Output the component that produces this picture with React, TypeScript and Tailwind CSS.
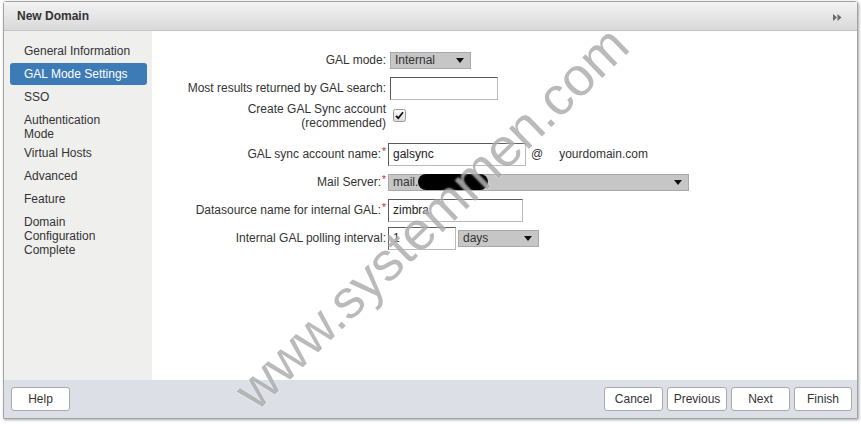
import React from "react";

const font = "font-['Liberation_Sans',Arial,sans-serif]";

function Arrow() {
  return (
    <svg width="8" height="5" viewBox="0 0 8 5" className="shrink-0">
      <path d="M0 0 H8 L4 5 Z" fill="#111" />
    </svg>
  );
}

function Req() {
  return <span className="text-[#c81e1e] text-[10px] leading-none relative -top-[3px] ml-[1px]">*</span>;
}

const navItems: { label: React.ReactNode; multi?: boolean; active?: boolean }[] = [
  { label: "General Information" },
  { label: "GAL Mode Settings", active: true },
  { label: "SSO" },
  { label: <>Authentication<br />Mode</>, multi: true },
  { label: "Virtual Hosts" },
  { label: "Advanced" },
  { label: "Feature" },
  { label: <>Domain<br />Configuration<br />Complete</>, multi: true },
];

const inputCls =
  "h-[23px] bg-white border border-t-[#5a5a5a] border-l-[#5a5a5a] border-r-[#b9b9b9] border-b-[#b9b9b9] px-[4px] flex items-center text-[12px] text-[#222]";

const selectCls =
  "h-[17px] bg-[#c6c6c6] border border-[#a9a9a9] pl-[4px] pr-[6px] flex items-center justify-between text-[12px] text-[#333]";

export default function App() {
  return (
    <div className={`relative w-[861px] h-[424px] overflow-hidden bg-white ${font}`}>
      <div className="ml-[3px] mt-[1px] w-[855px] h-[418px] flex flex-col border border-[#a3a3a3] rounded-t-[3px] shadow-[1px_1px_3px_rgba(0,0,0,0.35)]">
        {/* Title bar */}
        <div className="h-[29px] shrink-0 flex items-center justify-between px-[13px] border-b border-[#c4c4c4] bg-gradient-to-b from-[#f3f3f3] to-[#d9d9d9]">
          <span className="text-[12px] font-bold text-[#333]">New Domain</span>
          <svg width="9" height="7" viewBox="0 0 9 7" className="mr-[2px] mt-[3px]">
            <path d="M0 0 L4 3.5 L0 7 Z M4.5 0 L8.5 3.5 L4.5 7 Z" fill="#6a6a6a" />
          </svg>
        </div>

        {/* Body */}
        <div className="h-[349px] shrink-0 flex">
          <div className="w-[148px] shrink-0 bg-[#efefee] pt-[9px] pl-[6px] pr-[5px] flex flex-col gap-[1px]">
            {navItems.map((item, i) => (
              <div
                key={i}
                className={`pl-[14px] pt-[4px] ${item.multi ? "pb-0" : "pb-[4px]"} text-[12px] leading-[14px] rounded-[3px] ${
                  item.active ? "bg-[#3d7bb6] text-white" : "text-[#333]"
                }`}
              >
                {item.label}
              </div>
            ))}
          </div>

          <div className="flex-1 bg-white pt-[15px] text-[12px] text-[#333]">
            <div className="flex items-center h-[28px]">
              <div className="w-[234px] text-right">GAL mode:</div>
              <div className={`${selectCls} ml-[4px] w-[81px]`}>
                <span>Internal</span>
                <Arrow />
              </div>
            </div>

            <div className="flex items-center h-[28px]">
              <div className="w-[234px] text-right">Most results returned by GAL search:</div>
              <div className={`${inputCls} ml-[4px] w-[108px]`} />
            </div>

            <div className="flex items-center h-[28px]">
              <div className="w-[234px] text-right leading-[14px]">
                Create GAL Sync account
                <br />
                (recommended)
              </div>
              <svg width="13" height="13" viewBox="0 0 13 13" className="ml-[7px] -mt-[1px]">
                <defs>
                  <linearGradient id="cb" x1="0" y1="0" x2="0" y2="1">
                    <stop offset="0" stopColor="#fdfdfd" />
                    <stop offset="1" stopColor="#dcdcdc" />
                  </linearGradient>
                </defs>
                <rect x="0.5" y="0.5" width="12" height="12" rx="2" fill="url(#cb)" stroke="#9a9a9a" />
                <path d="M3 6.8 L5.3 9.2 L10 3.3" fill="none" stroke="#111" strokeWidth="1.8" />
              </svg>
            </div>

            <div className="flex items-center h-[28px] mt-[10px]">
              <div className="w-[234px] text-right">
                GAL sync account name:<Req />
              </div>
              <div className={`${inputCls} ml-[2px] w-[138px]`}>galsync</div>
              <span className="ml-[5px]">@</span>
              <span className="ml-[16px]">yourdomain.com</span>
            </div>

            <div className="flex items-center h-[28px]">
              <div className="w-[234px] text-right">
                Mail Server:<Req />
              </div>
              <div className={`${selectCls} ml-[2px] w-[301px] relative`}>
                <span className="flex items-center">
                  mail.
                  <span className="inline-block w-[70px] h-[16px] rounded-full bg-black" />
                </span>
                <Arrow />
              </div>
            </div>

            <div className="flex items-center h-[28px]">
              <div className="w-[234px] text-right">
                Datasource name for internal GAL:<Req />
              </div>
              <div className={`${inputCls} ml-[2px] w-[135px]`}>zimbra</div>
            </div>

            <div className="flex items-center h-[28px]">
              <div className="w-[234px] text-right">Internal GAL polling interval:</div>
              <div className={`${inputCls} ml-[2px] w-[68px]`}>1</div>
              <div className={`${selectCls} ml-[2px] w-[81px]`}>
                <span>days</span>
                <Arrow />
              </div>
            </div>
          </div>
        </div>

        {/* Footer */}
        <div className="h-[38px] shrink-0 bg-[#dcdfe5] flex items-center justify-between pl-[7px] pr-[5px]">
          <button className="w-[59px] h-[24px] bg-white border border-[#a9a9a9] rounded-[3px] text-[12px] text-[#333]">
            Help
          </button>
          <div className="flex gap-[4px]">
            {[
              ["Cancel", "w-[59px]"],
              ["Previous", "w-[60px]"],
              ["Next", "w-[59px]"],
              ["Finish", "w-[58px]"],
            ].map(([t, w]) => (
              <button
                key={t}
                className={`${w} h-[24px] bg-white border border-[#a9a9a9] rounded-[3px] text-[12px] text-[#333]`}
              >
                {t}
              </button>
            ))}
          </div>
        </div>
      </div>

      {/* Watermark */}
      <div className="pointer-events-none absolute left-[431px] top-[217px] -translate-x-1/2 -translate-y-1/2 -rotate-[44deg] whitespace-nowrap text-[54px] leading-none text-[rgba(90,90,90,0.42)] [text-shadow:0_0_2px_rgba(255,255,255,0.8)]">
        www.systemmen.com
      </div>
    </div>
  );
}
